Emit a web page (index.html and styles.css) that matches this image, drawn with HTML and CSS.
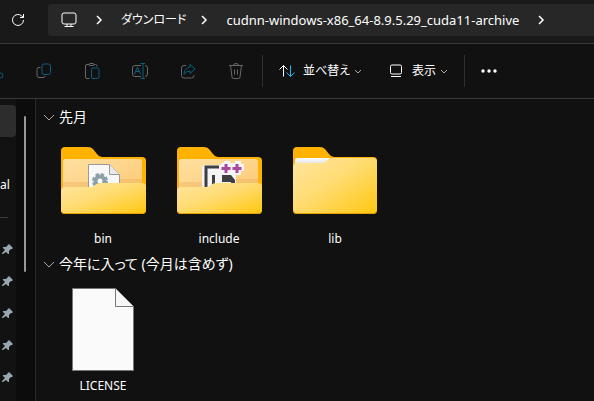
FILE: index.html
```html
<!DOCTYPE html>
<html lang="ja">
<head>
<meta charset="utf-8">
<title>cudnn-windows-x86_64-8.9.5.29_cuda11-archive</title>
<link rel="stylesheet" href="styles.css">
</head>
<body>
<svg class="defs" aria-hidden="true">
  <defs>
    <linearGradient id="front" x1="0" y1="0" x2="1" y2="1">
      <stop offset="0" stop-color="#ffe5a0"/><stop offset=".45" stop-color="#ffdc73"/><stop offset="1" stop-color="#ffc710"/>
    </linearGradient>
    <linearGradient id="inner" x1="0" y1="0" x2="1" y2="1">
      <stop offset="0" stop-color="#ffe0a0"/><stop offset="1" stop-color="#fbc873"/>
    </linearGradient>
    <linearGradient id="paper" x1="0" y1="0" x2="0" y2="1">
      <stop offset="0" stop-color="#fff"/><stop offset="1" stop-color="#d6d6d8"/>
    </linearGradient>
    <symbol id="folder-back" viewBox="0 0 96 96">
      <path d="M6 20q0-4 4-4h23q3 0 5 2l4 5q2 3 5 3h40q4 0 4 4v49q0 4-4 4H10q-4 0-4-4z" fill="#ffb300"/>
      <path d="M8 30q0-2 2-2h75q2 0 2 2v35H8z" fill="url(#inner)"/>
      <path d="M8 51h30l6-3h43v10H8z" fill="#e9ac55" opacity=".35"/>
    </symbol>
    <symbol id="folder-front" viewBox="0 0 96 96">
      <path d="M6 60h85v19q0 4-4 4H10q-4 0-4-4z" fill="#eaa000"/>
      <path d="M6 60q0-4 4-4h25q3 0 5-2t6-2h41q4 0 4 4v22q0 4-4 4H10q-4 0-4-4z" fill="url(#front)"/>
    </symbol>
    <symbol id="chevron-right" viewBox="0 0 12 12"><path d="M4 2l4 4-4 4"/></symbol>
    <symbol id="chevron-down" viewBox="0 0 12 12"><path d="M3 5l3 3 3-3"/></symbol>
    <symbol id="chevron-group" viewBox="0 0 12 12"><path d="M1 4l5 5 5-5"/></symbol>
    <symbol id="pin" viewBox="0 0 12 12">
      <path d="M7 1l4 4-1 1-1 0-2 2 0 3-1 0-2-2-3 2-1 0 0-1 3-3-2-2 0-1 3 0 2-2z" fill="#99a7ae"/>
    </symbol>
  </defs>
</svg>

<div class="window">
  <header class="navigation">
    <button class="refresh" aria-label="最新の情報に更新">
      <svg class="icon" viewBox="0 0 16 16"><path d="M13.500 8A5.500 5.500 0 1 1 11.800 4L13.500 5.500M13.500 2v3.500H10"/></svg>
    </button>
    <nav class="address" aria-label="アドレス">
      <svg class="icon" viewBox="0 0 16 16"><rect x="1" y="1" width="14" height="11" rx="2"/><path d="M6 12v2.500M10 12v2.500M3.500 14.500h9"/></svg>
      <svg class="chevron"><use href="#chevron-right"/></svg>
      <a class="kana" href="#">ダウンロード</a>
      <svg class="chevron"><use href="#chevron-right"/></svg>
      <a href="#">cudnn-windows-x86_64-8.9.5.29_cuda11-archive</a>
      <svg class="chevron"><use href="#chevron-right"/></svg>
    </nav>
  </header>

  <div class="toolbar">
    <button class="tool" disabled aria-label="切り取り"><svg class="icon" viewBox="0 0 16 16"><path d="M4 1l7 10M12 1L5 11"/><g class="accent"><circle cx="4" cy="13" r="2"/><circle cx="12.500" cy="12.500" r="2.500"/></g></svg></button>
    <button class="tool" disabled aria-label="コピー"><svg class="icon" viewBox="0 0 16 16"><path d="M4.500 4.500H3q-2 0-2 2v6q0 2 2 2h4q2 0 2-1.500"/><rect class="accent" x="6" y="1" width="8.500" height="10.500" rx="2"/></svg></button>
    <button class="tool" disabled aria-label="貼り付け"><svg class="icon" viewBox="0 0 16 16"><path d="M5 1.500H3q-1.500 0-1.500 1.500v11q0 1.500 1.500 1.500h2.500M10 1.500h1.500Q13 1.500 13 3.500"/><rect x="5" y=".5" width="5" height="2" rx="1"/><rect class="accent" x="7.500" y="5" width="7.500" height="10.500" rx="1.500"/></svg></button>
    <button class="tool" disabled aria-label="名前の変更"><svg class="icon" viewBox="0 0 16 16"><path d="M9 2.500H3q-2.500 0-2.500 2.500v6q0 2.500 2.500 2.500h6M13 2.500q2.500 0 2.500 2.500v6q0 2.500-2.500 2.500"/><path class="accent" d="M8.500.5H13M8.500 15.500H13M11 .5v15M2.500 11l3-7 3 7M3.500 8.500h4"/></svg></button>
    <button class="tool" disabled aria-label="共有"><svg class="icon" viewBox="0 0 16 16"><path d="M6 2.500H4Q1.500 2.500 1.500 5v7.500Q1.500 15 4 15h7.500q2.500 0 2.500-2.500V12"/><path class="accent" d="M10 1.500L15 6l-5 4.500V8Q6 8 4 11.500 4 5 10 4z"/></svg></button>
    <button class="tool" disabled aria-label="削除"><svg class="icon" viewBox="0 0 16 16"><path d="M1 2.500h14M5.500 2.500q0-2 2.500-2t2.500 2M2.500 2.500L4 14q0 1.500 1.500 1.500h5Q12 15.500 12 14l1.500-11.500M6.500 6.500v5M9.500 6.500v5"/></svg></button>
    <span class="divider"></span>
    <button class="command">
      <svg class="icon" viewBox="0 0 16 16"><path d="M4.500 13.500V2.500M.5 6.500l4-4 4 4"/><path class="accent" d="M11.500 2.500v11M7.500 9.500l4 4 4-4"/></svg>
      <span>並べ替え</span>
      <svg class="chevron"><use href="#chevron-down"/></svg>
    </button>
    <button class="command">
      <svg class="icon" viewBox="0 0 16 16"><rect x="2.500" y="2" width="11" height="9" rx="1.500"/><path d="M3 13.500h10"/></svg>
      <span>表示</span>
      <svg class="chevron"><use href="#chevron-down"/></svg>
    </button>
    <span class="divider end"></span>
    <button class="tool" aria-label="もっと見る"><svg class="icon dots" viewBox="0 0 16 16"><circle cx="2" cy="8" r="1.700"/><circle cx="8" cy="8" r="1.700"/><circle cx="14" cy="8" r="1.700"/></svg></button>
  </div>

  <div class="content">
    <aside class="sidebar">
      <div class="tree">
        <div class="row selected"></div>
        <div class="row"></div>
        <div class="row">al</div>
        <div class="row rule"></div>
        <div class="row"><svg class="pin"><use href="#pin"/></svg></div>
        <div class="row"><svg class="pin"><use href="#pin"/></svg></div>
        <div class="row"><svg class="pin"><use href="#pin"/></svg></div>
        <div class="row"><svg class="pin"><use href="#pin"/></svg></div>
        <div class="row"><svg class="pin"><use href="#pin"/></svg></div>
      </div>
      <div class="track"><div class="thumb"></div></div>
    </aside>

    <main class="files">
      <section class="group">
        <h2><svg class="chevron"><use href="#chevron-group"/></svg>先月</h2>
        <div class="tiles">
          <div class="tile">
            <svg class="art" viewBox="0 0 96 96">
              <use href="#folder-back"/>
              <path d="M33.500 33.500h21l10 10V62h-31z" fill="#f8f8f8" stroke="#999"/>
              <path d="M54.500 33.500v10h10" fill="#e9e9e9" stroke="#999"/>
              <circle cx="45" cy="50" r="4.500" fill="none" stroke="#8ba0a7" stroke-width="4"/>
              <circle cx="45" cy="50" r="6.500" fill="none" stroke="#8ba0a7" stroke-width="3" stroke-dasharray="3.200 1.900"/>
              <use href="#folder-front"/>
            </svg>
            <span>bin</span>
          </div>
          <div class="tile">
            <svg class="art" viewBox="0 0 96 96">
              <use href="#folder-back"/>
              <path d="M33 34h17v-2h3v-2h6v2h5v-2h6v3h3v7h-3v4h-5v18H31V36z" fill="#f5f3f4"/>
              <path d="M48 36H35v22M42.500 44v12" fill="none" stroke="#3f3f42" stroke-width="3"/>
              <path d="M51 44h9l4 5v8h-4v-6h-9z" fill="#3f3f42"/>
              <path d="M55 33v9M50.500 37.500h9M66 33v9M61.500 37.500h9" fill="none" stroke="#a8479b" stroke-width="3"/>
              <use href="#folder-front"/>
            </svg>
            <span>include</span>
          </div>
          <div class="tile">
            <svg class="art" viewBox="0 0 96 96">
              <path d="M6 20q0-4 4-4h23q3 0 5 2l4 5q2 3 5 3h39q4 0 4 4v49q0 4-4 4H10q-4 0-4-4z" fill="#ffb300"/>
              <path d="M8 29q0-2 2-2h33l-6 8H8z" fill="url(#paper)"/>
              <path d="M6 36q0-4 4-4h25q3 0 5-3 2-2 5-2h41q4 0 4 4v47q0 4-4 4H10q-4 0-4-4z" fill="url(#front)"/>
              <path d="M6 78q0 4 4 4h76q4 0 4-4v1q0 4-4 4H10q-4 0-4-4z" fill="#eaa000"/>
            </svg>
            <span>lib</span>
          </div>
        </div>
      </section>
      <section class="group">
        <h2><svg class="chevron"><use href="#chevron-group"/></svg>今年に入って (今月は含めず)</h2>
        <div class="tiles">
          <div class="tile">
            <svg class="art" viewBox="0 0 96 96">
              <path d="M17.500 10.500h43l18 18v64h-61z" fill="#fafafa" stroke="#777"/>
              <path d="M60.500 10.500v18h18" fill="#f6f6f6" stroke="#777"/>
            </svg>
            <span>LICENSE</span>
          </div>
        </div>
      </section>
    </main>
  </div>
</div>
</body>
</html>
```
FILE: styles.css
```css
* {
  box-sizing: border-box;
}

body {
  margin: 0;
  background: #111;
  color: #fff;
  font: 12px/18px "Noto Sans", "Noto Sans CJK JP", sans-serif;
  font-feature-settings: "palt";
}

button {
  padding: 0;
  border: 0;
  background: none;
  color: inherit;
  font: inherit;
  font-feature-settings: inherit;
}

a {
  color: inherit;
  text-decoration: none;
}

svg {
  flex: none;
  display: block;
  fill: none;
  stroke: currentColor;
}

.defs {
  position: absolute;
  width: 0;
  height: 0;
}

.window {
  display: flex;
  flex-direction: column;
  height: 100vh;
  overflow: hidden;
}

.icon {
  width: 16px;
  height: 16px;
}

.chevron {
  width: 12px;
  height: 12px;
}

.navigation {
  flex: none;
  display: flex;
  padding: 4px 0 7px;
  border-bottom: 1px solid #3a3a3a;
  background: #191919;
}

.refresh {
  display: flex;
  justify-content: center;
  align-items: center;
  width: 36px;
  margin-right: 12px;
}

.address {
  flex: 1;
  display: flex;
  align-items: center;
  gap: 16px;
  height: 32px;
  padding-left: 13px;
  border-radius: 4px 0 0 4px;
  background: #272727;
  font-size: 13px;
  white-space: nowrap;
}

.address .chevron {
  stroke-width: 1.5px;
}

.kana {
  margin-right: -4px;
  font-size: 12px;
}

.toolbar {
  flex: none;
  display: flex;
  align-items: center;
  height: 55px;
  margin-left: -28px;
  border-bottom: 1px solid #3a3a3a;
}

.tool {
  flex: none;
  display: flex;
  justify-content: center;
  align-items: center;
  width: 48px;
  height: 32px;
}

.tool:disabled {
  color: #686868;
}

.tool:disabled .accent {
  stroke: #07607e;
}

.dots {
  fill: #fff;
  stroke: none;
}

.divider {
  width: 1px;
  height: 32px;
  margin-left: 2px;
  background: #303030;
}

.divider.end {
  margin-left: 6px;
}

.command {
  flex: none;
  display: flex;
  align-items: center;
  gap: 8px;
  padding: 0 8px 0 16px;
}

.command .chevron {
  margin-left: -6px;
  color: #aaa;
}

.command .accent {
  stroke: #23b5f5;
}

.content {
  flex: 1;
  display: flex;
  min-height: 0;
}

.sidebar {
  flex: none;
  display: flex;
  width: 36px;
  border-right: 1px solid #2b2b2b;
  background: #0c0c0c;
}

.tree {
  width: 16px;
  padding-top: 6px;
  background: #121212;
}

.row {
  display: flex;
  align-items: center;
  height: 32px;
}

.selected {
  border-radius: 0 4px 4px 0;
  background: #2d2d2d;
}

.rule::before {
  content: "";
  width: 8px;
  height: 1px;
  background: #3a3a3a;
}

.pin {
  width: 12px;
  height: 12px;
  margin-left: 2px;
  stroke: none;
}

.track {
  padding: 17px 8px;
}

.thumb {
  width: 2px;
  height: 156px;
  border-radius: 1px;
  background: #999;
}

.files {
  flex: 1;
  padding-top: 6px;
}

h2 {
  display: flex;
  align-items: center;
  gap: 4px;
  height: 24px;
  margin: 0;
  padding-left: 7px;
  font-size: 14px;
  font-weight: 400;
}

h2 .chevron {
  color: #aaa;
}

.tiles {
  display: flex;
  flex-wrap: wrap;
  padding-left: 9px;
}

.tile {
  display: flex;
  flex-direction: column;
  align-items: center;
  width: 116px;
  padding: 2px 0 4px;
}

.tile span {
  margin-top: 3px;
}

.art {
  width: 96px;
  height: 96px;
  stroke: none;
}
```
